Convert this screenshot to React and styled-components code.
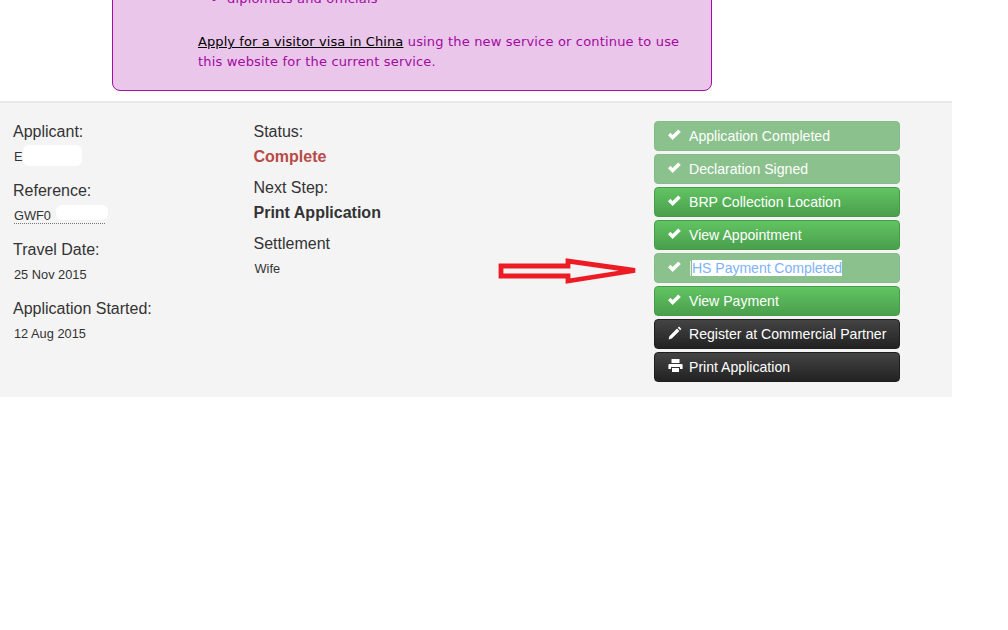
import React from "react";
import styled, { createGlobalStyle } from "styled-components";

const Global = createGlobalStyle`
  html, body { margin: 0; padding: 0; background: #fff; }
  body { font-family: "Liberation Sans", Arial, sans-serif; color: #333; overflow: hidden; height: 630px; }
`;
const Page = styled.div`
  width: 952px;
  position: relative;
`;
const Notice = styled.section`
  box-sizing: border-box;
  width: 600px;
  height: 110px;
  margin: -19px 0 10px 112px;
  padding: 7px 30px 0 85px;
  background: #e9c6ea;
  border: 1px solid #a30ea5;
  border-radius: 0 0 8px 8px;
  color: #a3099f;
  font: 13px/20px "DejaVu Sans", Verdana, sans-serif;
  letter-spacing: 0.17px;
`;
const Bullets = styled.ul`
  margin: 0 0 23px;
  padding: 0 0 0 29px;
  list-style: disc;
`;
const Para = styled.p`
  margin: 0;
`;
const BlackLink = styled.a`
  color: #000;
  text-decoration: underline;
  letter-spacing: 0.09px;
`;
const Panel = styled.main`
  position: relative;
  box-sizing: border-box;
  height: 296px;
  background: #f4f4f4;
  border-top: 2px solid #e8e8e8;
  display: flex;
  padding: 19px 52px 0 13px;
`;
const InfoColumn = styled.div`
  width: ${p => p.$w}px;
  flex: none;
  box-sizing: border-box;
`;
const Label = styled.div`
  font-size: 16px;
  line-height: 20px;
  color: #333;
`;
const Value = styled.div`
  font-size: ${p => p.$big ? 16 : 12.8}px;
  font-weight: ${p => p.$big ? 700 : 400};
  line-height: 20px;
  height: ${p => p.$h || 39}px;
  padding-top: 5px;
  padding-left: ${p => p.$big ? 0 : 1}px;
  box-sizing: border-box;
  color: ${p => p.$red ? "#b94a48" : "#333"};
  position: relative;
`;
const Dotted = styled.span`
  display: inline-block;
  width: 91px;
  border-bottom: 1px dotted #777;
  line-height: 15px;
`;
const Mask = styled.span`
  position: absolute;
  left: ${p => p.$l}px;
  top: ${p => p.$t}px;
  width: ${p => p.$w}px;
  height: ${p => p.$h}px;
  background: #fff;
  border-radius: 6px;
`;
const Actions = styled.div`
  width: 246px;
  margin: -1px 0 0 auto;
  display: flex;
  flex-direction: column;
  gap: 3px;
`;
const Action = styled.div`
  box-sizing: border-box;
  height: 30px;
  display: flex;
  align-items: center;
  padding-left: 13px;
  border-radius: 4px;
  border: 1px solid ${p => p.$kind === "dark" ? "#1f1f1f" : p.$kind === "done" ? "#85bb87" : "#459c48"};
  background: ${p => p.$kind === "dark"
    ? "linear-gradient(#444, #222)"
    : p.$kind === "done"
    ? "#8bc18d"
    : "linear-gradient(#62c462, #4a9f4d)"};
  color: #fff;
  font-size: 14.1px;
  white-space: nowrap;
`;
const IconSlot = styled.span`
  width: 21px;
  flex: none;
  display: flex;
  margin-top: -3px;
`;
const Caret = styled.span`
  width: 1px;
  height: 15px;
  margin: 0 1px 0 1px;
  background: #e4f0e4;
`;
const Selected = styled.span`
  background: #fff;
  color: #7eb3fb;
  line-height: 16px;
  letter-spacing: -0.06px;
`;
const ArrowMark = styled.svg`
  position: absolute;
  left: 490px;
  top: 143px;
  width: 160px;
  height: 40px;
`;

const Check = () => (
  <svg width="14" height="12" viewBox="1 0 14 12"><path d="M1 6.2 L3.4 3.8 L5.6 6 L11.2 0.6 L13.8 3 L5.6 11 Z" fill="#fff" /></svg>
);
const Pencil = () => (
  <svg width="14" height="14" viewBox="0 0 14 14"><path d="M11 0.6 L13.4 3 L12.2 4.2 L9.8 1.8 Z M9 2.6 L11.4 5 L3.8 12.6 L0.6 13.4 L1.4 10.2 Z" fill="#fff" /></svg>
);
const Printer = () => (
  <svg width="15" height="13" viewBox="0 0 15 13"><path d="M3.5 0 H11.5 V4 H3.5 Z M1.4 5 H13.6 Q14.6 5 14.6 6 V10 H12 V8 H3 V10 H0.4 V6 Q0.4 5 1.4 5 Z M4 9 H11 V13 H4 Z" fill="#fff" /></svg>
);

const actions = [
  ["done", <Check />, "Application Completed"],
  ["done", <Check />, "Declaration Signed"],
  ["go", <Check />, "BRP Collection Location"],
  ["go", <Check />, "View Appointment"],
  ["done", <Check />, <><Caret /><Selected>HS Payment Completed</Selected></>],
  ["go", <Check />, "View Payment"],
  ["dark", <Pencil />, "Register at Commercial Partner"],
  ["dark", <Printer />, "Print Application"],
];

export default function App() {
  return (
    <Page>
      <Global />
      <Notice>
        <Bullets><li>diplomats and officials</li></Bullets>
        <Para><BlackLink>Apply for a visitor visa in China</BlackLink> using the new service or continue to use this website for the current service.</Para>
      </Notice>
      <Panel>
        <InfoColumn $w={240.5}>
          <Label>Applicant:</Label>
          <Value $h={39}>E<Mask $l={10} $t={3} $w={59} $h={21} /></Value>
          <Label>Reference:</Label>
          <Value><Dotted>GWF0</Dotted><Mask $l={43} $t={4} $w={52} $h={15} /></Value>
          <Label>Travel Date:</Label>
          <Value $h={39}>25 Nov 2015</Value>
          <Label>Application Started:</Label>
          <Value>12 Aug 2015</Value>
        </InfoColumn>
        <InfoColumn $w={240}>
          <Label>Status:</Label>
          <Value $big $h={36} $red>Complete</Value>
          <Label>Next Step:</Label>
          <Value $big $h={36}>Print Application</Value>
          <Label>Settlement</Label>
          <Value>Wife</Value>
        </InfoColumn>
        <Actions>
          {actions.map(([kind, icon, text], i) => (
            <Action key={i} $kind={kind}><IconSlot>{icon}</IconSlot>{text}</Action>
          ))}
        </Actions>
        <ArrowMark viewBox="0 0 160 40">
          <path d="M11 20 H78 V15 L145 24.5 L78 35 V30 H11 Z" fill="none" stroke="#ed1c24" strokeWidth="4.8" />
        </ArrowMark>
      </Panel>
    </Page>
  );
}
